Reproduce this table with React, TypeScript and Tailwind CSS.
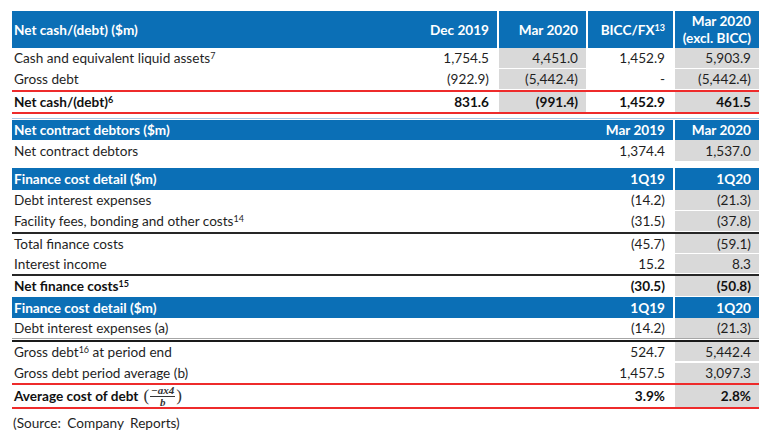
import React from "react";

const BLUE = "bg-[#0b6fb6]";

type Cell = { v: React.ReactNode; gray?: boolean };

function Sup({ children }: { children: React.ReactNode }) {
  return <span className="text-[9px] relative top-[-4px] leading-none">{children}</span>;
}

function Row({
  label,
  cells,
  widths,
  bold,
  h,
  border,
}: {
  label: React.ReactNode;
  cells: Cell[];
  widths: string[];
  bold?: boolean;
  h: string;
  border?: string;
}) {
  return (
    <div className={`flex gap-[2px] ${h} ${border ?? "pb-[1px]"} ${bold ? "font-bold text-[#111]" : ""}`}>
      <div className="flex-1 flex items-center pl-[2px] whitespace-nowrap">{label}</div>
      {cells.map((c, i) => (
        <div
          key={i}
          className={`${widths[i]} flex items-center justify-end pr-[8px] ${c.gray ? "bg-[#d9d9d9]" : ""}`}
        >
          {c.v}
        </div>
      ))}
    </div>
  );
}

const W4 = ["w-[90px]", "w-[87px]", "w-[85px]", "w-[84px]"];
const W2 = ["w-[90px]", "w-[84px]"];

function Header2({ title, a, b, h }: { title: string; a: string; b: string; h: string }) {
  return (
    <div className={`flex gap-[2px] ${h} text-white font-bold`}>
      <div className={`flex-1 ${BLUE} flex items-center justify-between pl-[2px] pr-[8px]`}>
        <span>{title}</span>
        <span>{a}</span>
      </div>
      <div className={`w-[84px] ${BLUE} flex items-center justify-end pr-[8px]`}>{b}</div>
    </div>
  );
}

const RED = "border-b-[2px] border-[#ee2b2b]";
const BLACK = "border-b-[2px] border-[#262626]";

export default function App() {
  return (
    <div className="w-[772px] h-[433px] bg-white pt-[11px] pl-[12px] pr-[13px] text-[#1f1f1f] text-[13.6px] leading-[16px] font-['Lato',sans-serif]">
      {/* Section 1 header */}
      <div className="flex gap-[2px] h-[37px] text-white font-bold">
        <div className={`flex-1 ${BLUE} flex items-center justify-between pl-[2px] pr-[8px]`}>
          <span>Net cash/(debt) ($m)</span>
          <span>Dec 2019</span>
        </div>
        <div className={`w-[87px] ${BLUE} flex items-center justify-end pr-[8px]`}>Mar 2020</div>
        <div className={`w-[85px] ${BLUE} flex items-center justify-end pr-[8px]`}>
          <span>
            BICC/FX<Sup>13</Sup>
          </span>
        </div>
        <div className={`w-[84px] ${BLUE} flex flex-col justify-center items-end pr-[8px] leading-[17px]`}>
          <span>Mar 2020</span>
          <span>(excl. BICC)</span>
        </div>
      </div>
      <Row
        h="h-[21px]"
        widths={W4}
        label={
          <span>
            Cash and equivalent liquid assets<Sup>7</Sup>
          </span>
        }
        cells={[{ v: "1,754.5" }, { v: "4,451.0", gray: true }, { v: "1,452.9" }, { v: "5,903.9", gray: true }]}
      />
      <Row
        h="h-[23px]"
        widths={W4}
        border={`pb-[1px] ${RED}`}
        label="Gross debt"
        cells={[{ v: "(922.9)" }, { v: "(5,442.4)", gray: true }, { v: "-" }, { v: "(5,442.4)", gray: true }]}
      />
      <Row
        h="h-[22px]"
        widths={W4}
        bold
        border={RED}
        label={
          <span>
            Net cash/(debt)<Sup>6</Sup>
          </span>
        }
        cells={[{ v: "831.6" }, { v: "(991.4)", gray: true }, { v: "1,452.9" }, { v: "461.5", gray: true }]}
      />
      <div className="h-[4px]" />
      <div className="h-[1px] bg-[#a9c8e6]" />
      <div className="h-[1px]" />

      {/* Section 2 */}
      <Header2 h="h-[20px]" title="Net contract debtors ($m)" a="Mar 2019" b="Mar 2020" />
      <Row
        h="h-[22px]"
        widths={W2}
        label="Net contract debtors"
        cells={[{ v: "1,374.4" }, { v: "1,537.0", gray: true }]}
      />
      <div className="h-[6px]" />

      {/* Section 3 */}
      <Header2 h="h-[22px]" title="Finance cost detail ($m)" a="1Q19" b="1Q20" />
      <Row h="h-[21px]" widths={W2} label="Debt interest expenses" cells={[{ v: "(14.2)" }, { v: "(21.3)", gray: true }]} />
      <Row
        h="h-[23px]"
        widths={W2}
        border={`pb-[1px] ${BLACK}`}
        label={
          <span>
            Facility fees, bonding and other costs<Sup>14</Sup>
          </span>
        }
        cells={[{ v: "(31.5)" }, { v: "(37.8)", gray: true }]}
      />
      <Row h="h-[20px]" widths={W2} label="Total finance costs" cells={[{ v: "(45.7)" }, { v: "(59.1)", gray: true }]} />
      <Row
        h="h-[22px]"
        widths={W2}
        border={`pb-[1px] ${BLACK}`}
        label="Interest income"
        cells={[{ v: "15.2" }, { v: "8.3", gray: true }]}
      />
      <Row
        h="h-[21px]"
        widths={W2}
        bold
        label={
          <span>
            Net finance costs<Sup>15</Sup>
          </span>
        }
        cells={[{ v: "(30.5)" }, { v: "(50.8)", gray: true }]}
      />

      {/* Section 4 */}
      <Header2 h="h-[21px]" title="Finance cost detail ($m)" a="1Q19" b="1Q20" />
      <Row h="h-[20px]" widths={W2} border="" label="Debt interest expenses (a)" cells={[{ v: "(14.2)" }, { v: "(21.3)", gray: true }]} />
      <div className="h-[1px] bg-[#a6a6a6]" />
      <div className="h-[1px]" />
      <div className="h-[2px] bg-[#1a1a1a]" />
      <Row
        h="h-[20px]"
        widths={W2}
        label={
          <span>
            Gross debt<Sup>16</Sup> at period end
          </span>
        }
        cells={[{ v: "524.7" }, { v: "5,442.4", gray: true }]}
      />
      <Row
        h="h-[23px]"
        widths={W2}
        border={`pt-[1px] ${RED}`}
        label="Gross debt period average (b)"
        cells={[{ v: "1,457.5" }, { v: "3,097.3", gray: true }]}
      />
      <Row
        h="h-[24px]"
        widths={W2}
        bold
        border={RED}
        label={
          <span className="flex items-center">
            Average cost of debt
            <span className="ml-[5px] inline-flex items-center font-['Liberation_Serif',serif] text-[#333]">
              <span className="text-[17px] font-normal leading-none relative top-[-1px]">(</span>
              <span className="inline-flex flex-col items-center italic font-bold text-[11px] leading-[9px] mx-[1px]">
                <span className="border-b border-[#333] px-[1px] pb-[1px]">−ax4</span>
                <span className="pt-[1px]">b</span>
              </span>
              <span className="text-[17px] font-normal leading-none relative top-[-1px]">)</span>
            </span>
          </span>
        }
        cells={[{ v: "3.9%" }, { v: "2.8%", gray: true }]}
      />
      <div className="mt-[6px] pl-[1px] [word-spacing:3px]">(Source: Company Reports)</div>
    </div>
  );
}
